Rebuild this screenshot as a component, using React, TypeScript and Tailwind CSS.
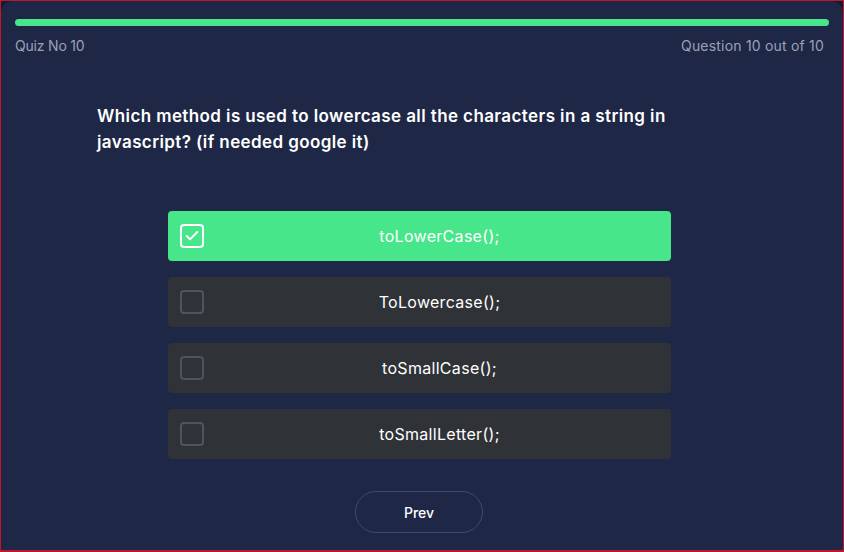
import { Check } from 'lucide-react';

const options = ['toLowerCase();', 'ToLowercase();', 'toSmallCase();', 'toSmallLetter();'];

export default function App() {
  const selected = 0;

  return (
    <div className="h-[552px] w-[844px] bg-[#141b31] border border-b-2 border-[#c0172d] font-['Inter','Noto_Sans',sans-serif]">
      <div className="h-full rounded-t-xl bg-[#1e2746] px-[14px] pt-[18px]">
        <div className="h-[7px] w-full rounded-full bg-[#47e68a]" />
        <div className="mt-[9px] flex justify-between text-[14px] text-[#9ba1b6]">
          <span className="tracking-[-0.2px]">Quiz No 10</span>
          <span className="pr-[5px] tracking-[0.2px]">Question 10 out of 10</span>
        </div>

        <div className="mx-auto mt-[47px] w-[650px] pr-[60px] text-[17px] font-semibold leading-[26px] tracking-[0.4px] text-white">
          Which method is used to lowercase all the characters in a string in javascript? (if needed google it)
        </div>

        <div className="mx-auto mt-[56px] flex w-[509px] flex-col gap-[16px] pr-[6px]">
          {options.map((opt, i) => {
            const active = i === selected;
            return (
              <div
                key={opt}
                className={`flex h-[50px] items-center rounded-[4px] pl-[12px] text-[16px] tracking-[0.3px] text-white ${
                  active ? 'bg-[#47e68a]' : 'bg-[#2f3236]'
                }`}
              >
                <div
                  className={`mr-[5px] flex h-[24px] w-[24px] shrink-0 items-center justify-center rounded-[4px] border-2 ${
                    active ? 'border-white' : 'border-[#51555b]'
                  }`}
                >
                  {active && <Check className="h-4 w-4 text-white" strokeWidth={3} />}
                </div>
                <span className="flex-1 text-center">{opt}</span>
              </div>
            );
          })}
        </div>

        <div className="mt-[32px] flex justify-center pr-[6px]">
          <button className="h-[42px] w-[128px] rounded-full border border-[#414b68] text-[14px] font-medium text-white">
            Prev
          </button>
        </div>
      </div>
    </div>
  );
}
